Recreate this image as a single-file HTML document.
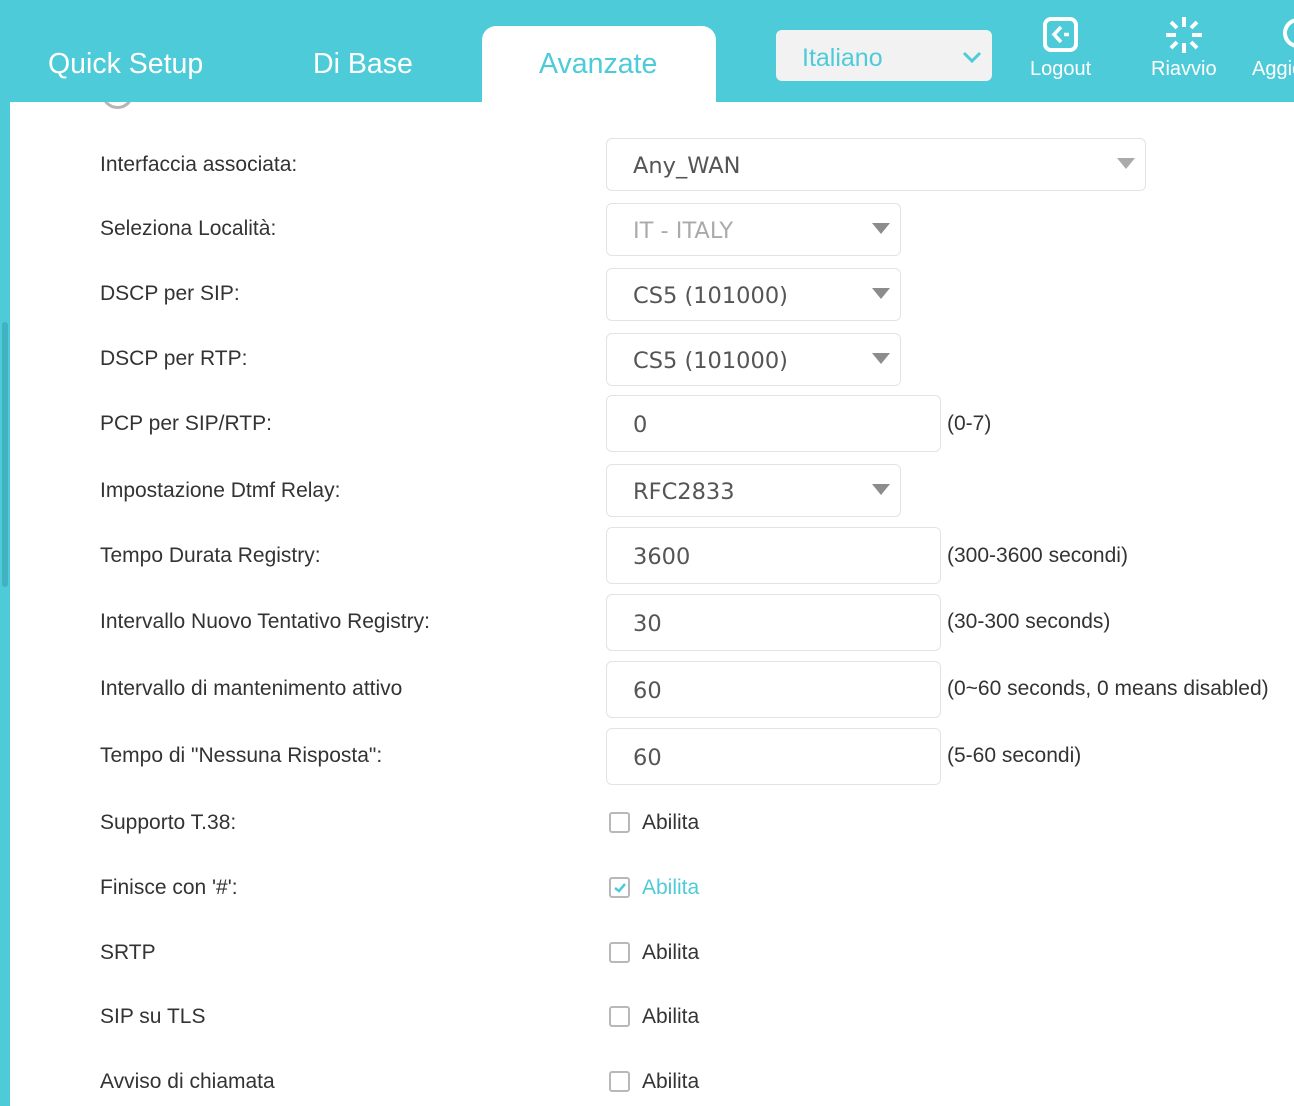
<!DOCTYPE html>
<html><head><meta charset="utf-8"><style>
*{margin:0;padding:0;box-sizing:border-box}
body{width:1294px;height:1106px;position:relative;overflow:hidden;background:#fff;font-family:"Liberation Sans",Arial,sans-serif;color:#333}
.a{position:absolute}
.hdr{left:0;top:0;width:1294px;height:102px;background:#4ecbd8}
.strip{left:0;top:0;width:10px;height:1106px;background:#4ecbd8}
.tab{color:#fff;font-size:28.5px;top:48px}
.lbl{left:100px;font-size:21px;color:#333;line-height:24px}
.box{left:606px;border:1px solid #e3e3e3;border-radius:6px;font-family:"DejaVu Sans",Verdana,sans-serif;font-size:22.5px;color:#555;padding-left:26px;padding-top:3px;display:flex;align-items:center;background:#fff}
.tri{position:absolute;right:10px;top:50%;margin-top:-7px;width:0;height:0;border-left:9px solid transparent;border-right:9px solid transparent;border-top:11px solid #8c8c8c}
.hint{left:947px;font-size:21px;color:#333;line-height:24px}
.cb{left:609px;width:21px;height:21px;border:2px solid #b8b8b8;border-radius:3px}
.ab{left:642px;font-size:21px;color:#333;line-height:24px}
</style></head><body>
<div class="a" style="left:101px;top:76px;width:33px;height:33px;border:3px solid #b5b5b5;border-radius:50%"></div>
<div class="a hdr"></div>
<div class="a strip"></div>
<div class="a" style="left:2px;top:322px;width:6px;height:265px;background:#41b3c0;border-radius:3px"></div>
<div class="a tab" style="left:48px">Quick Setup</div>
<div class="a tab" style="left:313px">Di Base</div>
<div class="a" style="left:482px;top:26px;width:234px;height:80px;background:#fff;border-radius:14px 14px 0 0"></div>
<div class="a tab" style="left:539px;color:#4ecbd8">Avanzate</div>
<div class="a" style="left:776px;top:30px;width:216px;height:51px;background:#f2f2f2;border-radius:6px"></div>
<div class="a" style="left:802px;top:44px;font-size:25px;color:#4ecbd8">Italiano</div>
<svg class="a" style="left:961px;top:50px" width="22" height="14"><path d="M3 3 L11 11 L19 3" stroke="#4ecbd8" stroke-width="3" fill="none"/></svg>
<svg class="a" style="left:1042px;top:16px" width="38" height="38"><rect x="3" y="3" width="31" height="31" rx="6" stroke="#fff" stroke-width="4" fill="none"/><path d="M19 11 L12 18.5 L19 26" stroke="#fff" stroke-width="3.5" fill="none"/><path d="M22 18.5 H27" stroke="#fff" stroke-width="3.5"/></svg>
<div class="a" style="left:1030px;top:58px;font-size:20px;color:#fff">Logout</div>
<svg class="a" style="left:1165px;top:16px" width="38" height="38" stroke="#fff" stroke-width="4"><path d="M19 1V11M19 27V37M1 19H11M27 19H37M6 6L12 12M26 26L32 32M32 6L26 12M12 26L6 32"/></svg>
<div class="a" style="left:1151px;top:58px;font-size:20px;color:#fff">Riavvio</div>
<div class="a" style="left:1283px;top:18px;width:30px;height:30px;border:4px solid #fff;border-radius:50%"></div>
<div class="a" style="left:1252px;top:58px;font-size:20px;color:#fff">Aggiorna</div>

<div class="a lbl" style="top:153px">Interfaccia associata:</div>
<div class="a box" style="top:138px;width:540px;height:53px">Any_WAN<div class="tri" style="border-top-color:#aaa"></div></div>
<div class="a lbl" style="top:217px">Seleziona Località:</div>
<div class="a box" style="top:203px;width:295px;height:53px;color:#aaa">IT - ITALY<div class="tri"></div></div>
<div class="a lbl" style="top:282px">DSCP per SIP:</div>
<div class="a box" style="top:268px;width:295px;height:53px">CS5 (101000)<div class="tri"></div></div>
<div class="a lbl" style="top:347px">DSCP per RTP:</div>
<div class="a box" style="top:333px;width:295px;height:53px">CS5 (101000)<div class="tri"></div></div>
<div class="a lbl" style="top:412px">PCP per SIP/RTP:</div>
<div class="a box" style="top:395px;width:335px;height:57px">0</div>
<div class="a hint" style="top:412px">(0-7)</div>
<div class="a lbl" style="top:479px">Impostazione Dtmf Relay:</div>
<div class="a box" style="top:464px;width:295px;height:53px">RFC2833<div class="tri"></div></div>
<div class="a lbl" style="top:544px">Tempo Durata Registry:</div>
<div class="a box" style="top:527px;width:335px;height:57px">3600</div>
<div class="a hint" style="top:544px">(300-3600 secondi)</div>
<div class="a lbl" style="top:610px">Intervallo Nuovo Tentativo Registry:</div>
<div class="a box" style="top:594px;width:335px;height:57px">30</div>
<div class="a hint" style="top:610px">(30-300 seconds)</div>
<div class="a lbl" style="top:677px">Intervallo di mantenimento attivo</div>
<div class="a box" style="top:661px;width:335px;height:57px">60</div>
<div class="a hint" style="top:677px">(0~60 seconds, 0 means disabled)</div>
<div class="a lbl" style="top:744px">Tempo di "Nessuna Risposta":</div>
<div class="a box" style="top:728px;width:335px;height:57px">60</div>
<div class="a hint" style="top:744px">(5-60 secondi)</div>

<div class="a lbl" style="top:811px">Supporto T.38:</div>
<div class="a cb" style="top:812px"></div><div class="a ab" style="top:811px">Abilita</div>
<div class="a lbl" style="top:876px">Finisce con '#':</div>
<div class="a cb" style="top:877px"></div>
<svg class="a" style="left:612px;top:880px" width="16" height="16"><path d="M3 8 L7 11 L13 4" stroke="#4ecbd8" stroke-width="2.5" fill="none"/></svg>
<div class="a ab" style="top:876px;color:#4ecbd8">Abilita</div>
<div class="a lbl" style="top:941px">SRTP</div>
<div class="a cb" style="top:942px"></div><div class="a ab" style="top:941px">Abilita</div>
<div class="a lbl" style="top:1005px">SIP su TLS</div>
<div class="a cb" style="top:1006px"></div><div class="a ab" style="top:1005px">Abilita</div>
<div class="a lbl" style="top:1070px">Avviso di chiamata</div>
<div class="a cb" style="top:1071px"></div><div class="a ab" style="top:1070px">Abilita</div>
</body></html>
